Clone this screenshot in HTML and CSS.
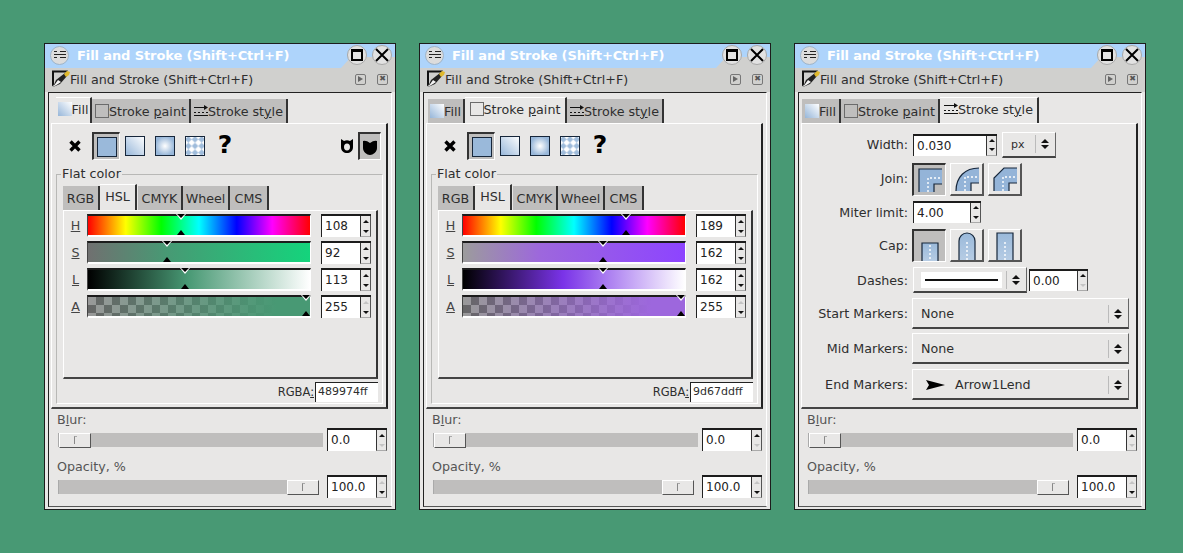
FILE: index.html
```html
<!DOCTYPE html>
<html lang="en">
<head>
  <meta charset="UTF-8" />
  <title>Fill and Stroke</title>
  <link rel="stylesheet" href="styles.css">
</head>
<body>
  <svg class="defs" width="0" height="0">
    <defs>
      <linearGradient id="gradLinear" x1="0" y1="1" x2="1" y2="0">
        <stop offset="0" stop-color="#96b6d9"/><stop offset="1" stop-color="#ffffff"/>
      </linearGradient>
      <radialGradient id="gradRadial">
        <stop offset="0" stop-color="#ffffff"/><stop offset="1" stop-color="#98b7d9"/>
      </radialGradient>
      <pattern id="dots" width="6.667" height="6.667" patternUnits="userSpaceOnUse">
        <rect width="6.667" height="6.667" fill="#fff"/>
        <path d="M3.330 0l3.330 3.330-3.330 3.330L0 3.330z" fill="#9fbcdb"/>
      </pattern>
      <linearGradient id="gradCap" x1="0" y1="0" x2="0" y2="1">
        <stop offset="0" stop-color="#9ab9da"/><stop offset="1" stop-color="#b6cce4"/>
      </linearGradient>
      <symbol id="flat" viewBox="0 0 20 20"><rect x=".5" y=".5" width="19" height="19" fill="#9ab9da" stroke="#16263a"/></symbol>
      <symbol id="linear" viewBox="0 0 20 20"><rect x=".5" y=".5" width="19" height="19" fill="url(#gradLinear)" stroke="#16263a"/></symbol>
      <symbol id="radial" viewBox="0 0 20 20"><rect x=".5" y=".5" width="19" height="19" fill="url(#gradRadial)" stroke="#16263a"/></symbol>
      <symbol id="swatch" viewBox="0 0 20 20"><rect x=".5" y=".5" width="19" height="19" fill="url(#dots)" stroke="#16263a"/></symbol>
      <symbol id="none" viewBox="0 0 14 14"><path d="M2.500 2.500l9 9m0-9l-9 9" fill="none" stroke="#000" stroke-width="3.400"/></symbol>
      <symbol id="tabfill" viewBox="0 0 14 14"><rect width="14" height="14" fill="url(#gradLinear)"/></symbol>
      <symbol id="tabstroke" viewBox="0 0 14 14"><rect x=".5" y=".5" width="13" height="13" fill="none" stroke="#6b6b6b"/></symbol>
      <symbol id="tabstyle" viewBox="0 0 14 14"><path d="M0 3.500h10M0 8.500h2m2 0h2m2 0h2m2 0h2M0 11.500h14" fill="none" stroke="#111"/><path d="M10 1l4 2.500-4 2.500z" fill="#111"/></symbol>
      <symbol id="brush" viewBox="0 0 18 18"><path d="M0 16.500V.5h16l-2 2H2v12z" fill="#111"/><path d="M1 17l3-7 9-7 2 3-7 8z" fill="#222"/><path d="M1 17l5-3 3-2-3-2z" fill="#f4f4f4"/><path d="M12 4l3-3 3 1-1 3-3 2z" fill="#e0b82c"/></symbol>
      <symbol id="menu" viewBox="0 0 12 10"><path d="M0 1.500h3m3 0h6M0 4.500h12M0 7.500h3m3 0h6" fill="none" stroke="#222" stroke-width="1.200"/></symbol>
      <symbol id="ruleHole" viewBox="0 0 14 16"><path fill-rule="evenodd" d="M1 1l3 2q3-1.500 6 0l3-2v8c0 4-3 6-6 6s-6-2-6-6zM7 5.500c-2 0-3 1.500-3 3.500s1 3.500 3 3.500 3-1.500 3-3.500-1-3.500-3-3.500z" fill="#000"/></symbol>
      <symbol id="ruleSolid" viewBox="0 0 16 16"><path d="M1 2q3-1 7 2 4-3 7-2v7c0 4-4 7-7 7s-7-3-7-7z" fill="#000"/></symbol>
      <symbol id="joinMiter" viewBox="0 0 24 24"><path d="M1 1h23v15h-8v8H1z" fill="#94b4d8"/><path d="M1 24V1h23M24 16h-8v8" fill="none" stroke="#16263a" stroke-width="1.200"/><path d="M10 24V10h14" fill="none" stroke="#fff" stroke-width="1.400" stroke-dasharray="2 2"/></symbol>
      <symbol id="joinRound" viewBox="0 0 24 24"><path d="M1 24C1 10 10 1 24 1v15h-8v8z" fill="#94b4d8"/><path d="M1 24C1 10 10 1 24 1M24 16h-8v8" fill="none" stroke="#16263a" stroke-width="1.200"/><path d="M10 24V10h14" fill="none" stroke="#fff" stroke-width="1.400" stroke-dasharray="2 2"/></symbol>
      <symbol id="joinBevel" viewBox="0 0 24 24"><path d="M1 24V11L11 1h13v15h-8v8z" fill="#94b4d8"/><path d="M1 24V11L11 1h13M24 16h-8v8" fill="none" stroke="#16263a" stroke-width="1.200"/><path d="M10 24V10h14" fill="none" stroke="#fff" stroke-width="1.400" stroke-dasharray="2 2"/></symbol>
      <symbol id="capButt" viewBox="0 0 18 28"><path d="M1 10h16v18H1z" fill="url(#gradCap)"/><path d="M1 28V10h16v18" fill="none" stroke="#16263a" stroke-width="1.200"/><path d="M9 12v16" stroke="#fff" stroke-width="1.400" stroke-dasharray="2 2"/></symbol>
      <symbol id="capRound" viewBox="0 0 18 28"><path d="M1 28V9a8 8 0 0 1 16 0v19z" fill="url(#gradCap)"/><path d="M1 28V9a8 8 0 0 1 16 0v19" fill="none" stroke="#16263a" stroke-width="1.200"/><path d="M9 10v18" stroke="#fff" stroke-width="1.400" stroke-dasharray="2 2"/></symbol>
      <symbol id="capSquare" viewBox="0 0 18 28"><path d="M1 1h16v27H1z" fill="url(#gradCap)"/><path d="M1 28V1h16v27" fill="none" stroke="#16263a" stroke-width="1.200"/><path d="M9 10v18" stroke="#fff" stroke-width="1.400" stroke-dasharray="2 2"/></symbol>
      <symbol id="mark" viewBox="0 0 10 23"><path d="M0 0h10l-5 6z" fill="#fff"/><path d="M1 0h8l-4 4z" fill="#000"/><path d="M1 21h8l-4-5z" fill="#000"/></symbol>
    </defs>
  </svg>

  <div class="desk">

    <!-- fill tab, green -->
    <div class="window">
      <div class="titlebar">
        <span class="wm-menu"><svg width="12" height="10"><use href="#menu"/></svg></span>
        <span class="title">Fill and Stroke (Shift+Ctrl+F)</span>
        <span class="wm-btn"><i class="wm-max"></i></span>
        <span class="wm-btn wm-close"><svg width="14" height="14"><path d="M1 1l12 12m0-12L1 13" stroke="#000" stroke-width="2"/></svg></span>
      </div>
      <div class="dockbar">
        <svg class="dock-icon" width="18" height="18"><use href="#brush"/></svg>
        <span class="dock-title">Fill and Stroke (Shift+Ctrl+F)</span>
        <span class="dock-btn"><i class="dock-play"></i></span>
        <span class="dock-btn dock-x">&#10006;</span>
      </div>
      <div class="frame">
        <div class="notebook">
          <div class="tabs">
            <div class="tab active w-fill"><svg width="14" height="14"><use href="#tabfill"/></svg><span>Fill</span></div>
            <div class="tab w-paint"><svg width="14" height="14"><use href="#tabstroke"/></svg><span>Stroke <u>p</u>aint</span></div>
            <div class="tab w-style"><svg width="14" height="14"><use href="#tabstyle"/></svg><span>Stroke st<u>y</u>le</span></div>
          </div>
          <div class="panel">
            <div class="modes">
              <svg class="mode-none" width="14" height="14"><use href="#none"/></svg>
              <span class="toggle on"><svg width="20" height="20"><use href="#flat"/></svg></span>
              <svg class="mode" width="20" height="20"><use href="#linear"/></svg>
              <svg class="mode" width="20" height="20"><use href="#radial"/></svg>
              <svg class="mode" width="20" height="20"><use href="#swatch"/></svg>
              <span class="mode-q">?</span>
              <svg class="rule" width="14" height="16"><use href="#ruleHole"/></svg>
              <span class="toggle on rule-on"><svg width="16" height="16"><use href="#ruleSolid"/></svg></span>
            </div>
            <div class="group">
              <span class="group-label">Flat color</span>
              <div class="tabs sub">
                <div class="tab w-rgb">RGB</div>
                <div class="tab active w-hsl">HSL</div>
                <div class="tab w-cmyk">CMYK</div>
                <div class="tab w-wheel">Wheel</div>
                <div class="tab w-cms">CMS</div>
              </div>
              <div class="subpanel green">
                <div class="slider-row">
                  <span class="chan"><u>H</u></span>
                  <div class="bar hue"><svg class="mark" style="left:42%" width="10" height="23"><use href="#mark"/></svg></div>
                  <div class="spin"><span class="entry">108</span><span class="arrows"><i class="up"></i><i class="down"></i></span></div>
                </div>
                <div class="slider-row">
                  <span class="chan"><u>S</u></span>
                  <div class="bar sat"><svg class="mark" style="left:35.500%" width="10" height="23"><use href="#mark"/></svg></div>
                  <div class="spin"><span class="entry">92</span><span class="arrows"><i class="up"></i><i class="down"></i></span></div>
                </div>
                <div class="slider-row">
                  <span class="chan"><u>L</u></span>
                  <div class="bar lum"><svg class="mark" style="left:43.500%" width="10" height="23"><use href="#mark"/></svg></div>
                  <div class="spin"><span class="entry">113</span><span class="arrows"><i class="up"></i><i class="down"></i></span></div>
                </div>
                <div class="slider-row">
                  <span class="chan"><u>A</u></span>
                  <div class="bar alpha"><svg class="mark" style="left:98%" width="10" height="23"><use href="#mark"/></svg></div>
                  <div class="spin"><span class="entry dim">255</span><span class="arrows"><i class="up off"></i><i class="down"></i></span></div>
                </div>
              </div>
              <div class="rgba"><span class="rgba-label">RGBA<u>:</u></span><span class="rgba-entry">489974ff</span></div>
            </div>
          </div>
        </div>
        <div class="bottom">
          <div class="bottom-label">B<u>l</u>ur:</div>
          <div class="bottom-row">
            <div class="track"><span class="thumb"><i></i></span></div>
            <div class="spin wide"><span class="entry">0.0</span><span class="arrows"><i class="up"></i><i class="down off"></i></span></div>
          </div>
          <div class="bottom-label">Opacity, %</div>
          <div class="bottom-row">
            <div class="track end"><span class="thumb"><i></i></span></div>
            <div class="spin wide"><span class="entry">100.0</span><span class="arrows"><i class="up off"></i><i class="down"></i></span></div>
          </div>
        </div>
      </div>
    </div>

    <!-- stroke paint tab, purple -->
    <div class="window">
      <div class="titlebar">
        <span class="wm-menu"><svg width="12" height="10"><use href="#menu"/></svg></span>
        <span class="title">Fill and Stroke (Shift+Ctrl+F)</span>
        <span class="wm-btn"><i class="wm-max"></i></span>
        <span class="wm-btn wm-close"><svg width="14" height="14"><path d="M1 1l12 12m0-12L1 13" stroke="#000" stroke-width="2"/></svg></span>
      </div>
      <div class="dockbar">
        <svg class="dock-icon" width="18" height="18"><use href="#brush"/></svg>
        <span class="dock-title">Fill and Stroke (Shift+Ctrl+F)</span>
        <span class="dock-btn"><i class="dock-play"></i></span>
        <span class="dock-btn dock-x">&#10006;</span>
      </div>
      <div class="frame">
        <div class="notebook">
          <div class="tabs">
            <div class="tab w-fill2"><svg width="14" height="14"><use href="#tabfill"/></svg><span>Fill</span></div>
            <div class="tab active w-paint2"><svg width="14" height="14"><use href="#tabstroke"/></svg><span>Stroke <u>p</u>aint</span></div>
            <div class="tab w-style"><svg width="14" height="14"><use href="#tabstyle"/></svg><span>Stroke st<u>y</u>le</span></div>
          </div>
          <div class="panel">
            <div class="modes">
              <svg class="mode-none" width="14" height="14"><use href="#none"/></svg>
              <span class="toggle on"><svg width="20" height="20"><use href="#flat"/></svg></span>
              <svg class="mode" width="20" height="20"><use href="#linear"/></svg>
              <svg class="mode" width="20" height="20"><use href="#radial"/></svg>
              <svg class="mode" width="20" height="20"><use href="#swatch"/></svg>
              <span class="mode-q">?</span>
            </div>
            <div class="group">
              <span class="group-label">Flat color</span>
              <div class="tabs sub">
                <div class="tab w-rgb">RGB</div>
                <div class="tab active w-hsl">HSL</div>
                <div class="tab w-cmyk">CMYK</div>
                <div class="tab w-wheel">Wheel</div>
                <div class="tab w-cms">CMS</div>
              </div>
              <div class="subpanel purple">
                <div class="slider-row">
                  <span class="chan"><u>H</u></span>
                  <div class="bar hue"><svg class="mark" style="left:73.500%" width="10" height="23"><use href="#mark"/></svg></div>
                  <div class="spin"><span class="entry">189</span><span class="arrows"><i class="up"></i><i class="down"></i></span></div>
                </div>
                <div class="slider-row">
                  <span class="chan"><u>S</u></span>
                  <div class="bar sat"><svg class="mark" style="left:63%" width="10" height="23"><use href="#mark"/></svg></div>
                  <div class="spin"><span class="entry">162</span><span class="arrows"><i class="up"></i><i class="down"></i></span></div>
                </div>
                <div class="slider-row">
                  <span class="chan"><u>L</u></span>
                  <div class="bar lum"><svg class="mark" style="left:63%" width="10" height="23"><use href="#mark"/></svg></div>
                  <div class="spin"><span class="entry">162</span><span class="arrows"><i class="up"></i><i class="down"></i></span></div>
                </div>
                <div class="slider-row">
                  <span class="chan"><u>A</u></span>
                  <div class="bar alpha"><svg class="mark" style="left:98%" width="10" height="23"><use href="#mark"/></svg></div>
                  <div class="spin"><span class="entry dim">255</span><span class="arrows"><i class="up off"></i><i class="down"></i></span></div>
                </div>
              </div>
              <div class="rgba"><span class="rgba-label">RGBA<u>:</u></span><span class="rgba-entry">9d67ddff</span></div>
            </div>
          </div>
        </div>
        <div class="bottom">
          <div class="bottom-label">B<u>l</u>ur:</div>
          <div class="bottom-row">
            <div class="track"><span class="thumb"><i></i></span></div>
            <div class="spin wide"><span class="entry">0.0</span><span class="arrows"><i class="up"></i><i class="down off"></i></span></div>
          </div>
          <div class="bottom-label">Opacity, %</div>
          <div class="bottom-row">
            <div class="track end"><span class="thumb"><i></i></span></div>
            <div class="spin wide"><span class="entry">100.0</span><span class="arrows"><i class="up off"></i><i class="down"></i></span></div>
          </div>
        </div>
      </div>
    </div>

    <!-- stroke style tab -->
    <div class="window">
      <div class="titlebar">
        <span class="wm-menu"><svg width="12" height="10"><use href="#menu"/></svg></span>
        <span class="title">Fill and Stroke (Shift+Ctrl+F)</span>
        <span class="wm-btn"><i class="wm-max"></i></span>
        <span class="wm-btn wm-close"><svg width="14" height="14"><path d="M1 1l12 12m0-12L1 13" stroke="#000" stroke-width="2"/></svg></span>
      </div>
      <div class="dockbar">
        <svg class="dock-icon" width="18" height="18"><use href="#brush"/></svg>
        <span class="dock-title">Fill and Stroke (Shift+Ctrl+F)</span>
        <span class="dock-btn"><i class="dock-play"></i></span>
        <span class="dock-btn dock-x">&#10006;</span>
      </div>
      <div class="frame">
        <div class="notebook">
          <div class="tabs">
            <div class="tab w-fill3"><svg width="14" height="14"><use href="#tabfill"/></svg><span>Fill</span></div>
            <div class="tab w-paint"><svg width="14" height="14"><use href="#tabstroke"/></svg><span>Stroke <u>p</u>aint</span></div>
            <div class="tab active w-style3"><svg width="14" height="14"><use href="#tabstyle"/></svg><span>Stroke st<u>y</u>le</span></div>
          </div>
          <div class="panel">
            <div class="form">
              <span class="form-label">Width:</span>
              <div class="inline">
                <div class="spin w-width"><span class="entry">0.030</span><span class="arrows"><i class="up"></i><i class="down"></i></span></div>
                <div class="combo unit"><span class="combo-text">px</span><span class="combo-arrow"><i class="up"></i><i class="down"></i></span></div>
              </div>

              <span class="form-label raised">Join:</span>
              <div class="inline gap">
                <span class="icon-btn on"><svg width="24" height="24"><use href="#joinMiter"/></svg></span>
                <span class="icon-btn"><svg width="24" height="24"><use href="#joinRound"/></svg></span>
                <span class="icon-btn"><svg width="24" height="24"><use href="#joinBevel"/></svg></span>
              </div>

              <span class="form-label">Miter limit:</span>
              <div class="spin w-miter"><span class="entry">4.00</span><span class="arrows"><i class="up"></i><i class="down"></i></span></div>

              <span class="form-label">Cap:</span>
              <div class="inline gap">
                <span class="icon-btn cap on"><svg width="18" height="28"><use href="#capButt"/></svg></span>
                <span class="icon-btn cap"><svg width="18" height="28"><use href="#capRound"/></svg></span>
                <span class="icon-btn cap"><svg width="18" height="28"><use href="#capSquare"/></svg></span>
              </div>

              <span class="form-label">Dashes:</span>
              <div class="inline">
                <div class="combo dashes"><span class="dash-preview"><i></i></span><span class="combo-arrow"><i class="up"></i><i class="down"></i></span></div>
                <div class="spin w-dash"><span class="entry">0.00</span><span class="arrows"><i class="up"></i><i class="down off"></i></span></div>
              </div>

              <span class="form-label">Start Markers:</span>
              <div class="combo marker"><span class="combo-text">None</span><span class="combo-arrow"><i class="up"></i><i class="down"></i></span></div>

              <span class="form-label">Mid Markers:</span>
              <div class="combo marker"><span class="combo-text">None</span><span class="combo-arrow"><i class="up"></i><i class="down"></i></span></div>

              <span class="form-label">End Markers:</span>
              <div class="combo marker">
                <span class="combo-text"><svg class="arrow1" width="19" height="10"><path d="M0 0l19 5-19 5 3-5z" fill="#000"/></svg>Arrow1Lend</span>
                <span class="combo-arrow"><i class="up"></i><i class="down"></i></span>
              </div>
            </div>
          </div>
        </div>
        <div class="bottom">
          <div class="bottom-label">B<u>l</u>ur:</div>
          <div class="bottom-row">
            <div class="track"><span class="thumb"><i></i></span></div>
            <div class="spin wide"><span class="entry">0.0</span><span class="arrows"><i class="up"></i><i class="down off"></i></span></div>
          </div>
          <div class="bottom-label">Opacity, %</div>
          <div class="bottom-row">
            <div class="track end"><span class="thumb"><i></i></span></div>
            <div class="spin wide"><span class="entry">100.0</span><span class="arrows"><i class="up off"></i><i class="down"></i></span></div>
          </div>
        </div>
      </div>
    </div>

  </div>
</body>
</html>
```

FILE: styles.css
```css
* {
  box-sizing: border-box;
}

body {
  margin: 0;
  background: #489974;
  font-family: "DejaVu Sans", sans-serif;
  font-size: 12.7px;
  color: #2e2e2e;
}

.defs {
  display: block;
}

.desk {
  display: flex;
  gap: 23px;
  padding: 43px 0 0 44px;
}

.window {
  width: 352px;
  height: 467px;
  border: 1px solid #1c1c1c;
  background: #e8e7e6;
  display: flex;
  flex-direction: column;
}

/* title bar */
.titlebar {
  position: relative;
  height: 24px;
  background: #d0d0ce;
  display: flex;
  align-items: center;
  padding: 0 3px 2px 5px;
  flex-shrink: 0;
}

.titlebar::before {
  content: "";
  position: absolute;
  inset: 0;
  background: #aed4fb;
  clip-path: polygon(0 0, 100% 0, 100% 13px, 306px 13px, 296px 100%, 0 100%);
}

.titlebar > * {
  position: relative;
}

.wm-menu {
  width: 19px;
  height: 19px;
  border-radius: 50%;
  background: #dcdcdc;
  border: 1px solid #9fb4c8;
  display: flex;
  align-items: center;
  justify-content: center;
}

.title {
  flex: 1;
  margin-left: 8px;
  font-size: 13px;
  font-weight: bold;
  color: #fff;
  letter-spacing: -0.1px;
}

.wm-btn {
  width: 20px;
  height: 20px;
  margin-left: 5px;
  border-radius: 50%;
  background: #e2e2e2;
  border: 1px solid #a8a8a8;
  display: flex;
  align-items: center;
  justify-content: center;
}

.wm-max {
  width: 12px;
  height: 12px;
  border: 2px solid #000;
  border-top-width: 3px;
}

/* dock title */
.dockbar {
  height: 24px;
  background: #d0d0ce;
  display: flex;
  align-items: center;
  padding: 0 7px 2px 7px;
  flex-shrink: 0;
}

.dock-title {
  flex: 1;
}

.dock-btn {
  width: 11px;
  height: 11px;
  margin-left: 11px;
  border: 1px solid #777;
  border-radius: 2px;
  display: flex;
  align-items: center;
  justify-content: center;
  font-size: 8px;
  line-height: 1;
  color: #555;
}

.dock-play {
  border-left: 5px solid #666;
  border-top: 3px solid transparent;
  border-bottom: 3px solid transparent;
}

/* dock frame */
.frame {
  flex: 1;
  margin: 0 3px 3px 3px;
  border: 1px solid #222;
  border-right-color: #fff;
  border-bottom-color: #555;
}

.notebook {
  width: 337px;
  margin: 4px 0 0 2px;
}

.tabs {
  display: flex;
  align-items: flex-end;
  height: 26px;
  padding-left: 5px;
}

.tab {
  height: 24px;
  background: #bfbebd;
  border-right: 2px solid #333;
  display: flex;
  align-items: center;
  justify-content: center;
  white-space: nowrap;
}

.tab svg {
  flex-shrink: 0;
}

.tab.active {
  height: 26px;
  padding-bottom: 3px;
  background: #e8e7e6;
  border-top: 1px solid #fff;
}

.w-fill { width: 36px; }
.w-paint { width: 99px; }
.w-style { width: 97px; }
.w-fill2 { width: 37px; margin-left: -3px; }
.w-paint2 { width: 102px; }
.w-fill3 { width: 39px; margin-left: -4px; }
.w-style3 { width: 99px; }

.panel {
  height: 286px;
  border: 1px solid #fff;
  border-right: 2px solid #222;
  border-bottom: 2px solid #444;
}

/* paint mode row */
.modes {
  display: flex;
  align-items: center;
  height: 28px;
  margin-top: 8px;
  padding-left: 16px;
}

.mode-none {
  margin-right: 10px;
}

.toggle {
  width: 28px;
  height: 28px;
  display: flex;
  align-items: center;
  justify-content: center;
  flex-shrink: 0;
}

.toggle.on {
  background: #bfbebd;
  border-top: 2px solid #333;
  border-left: 2px solid #333;
  border-right: 1px solid #fff;
  border-bottom: 1px solid #fff;
}

.mode {
  margin-left: 10px;
}

.toggle + .mode {
  margin-left: 5px;
}

.mode-q {
  width: 20px;
  margin-left: 10px;
  padding-bottom: 2px;
  font-size: 25px;
  font-weight: bold;
  line-height: 26px;
  text-align: center;
  color: #000;
}

.rule {
  margin-left: auto;
  margin-right: 4px;
}

.rule-on {
  width: 23px;
  margin-right: 5px;
}

/* flat color group */
.group {
  position: relative;
  width: 327px;
  height: 230px;
  margin: 14px 0 0 4px;
  border: 1px solid #b8b8b6;
  border-right-color: #fff;
  border-bottom-color: #fff;
  padding: 9px 0 0 6px;
}

.group-label {
  position: absolute;
  top: -9px;
  left: 4px;
  padding: 0 1px;
  background: #e8e7e6;
}

.tabs.sub {
  padding-left: 0;
}

.w-rgb { width: 37px; }
.w-hsl { width: 37px; }
.w-cmyk { width: 45px; margin-left: 1px; }
.w-wheel { width: 47px; }
.w-cms { width: 39px; }

.subpanel {
  width: 315px;
  height: 169px;
  border: 1px solid #fff;
  border-right: 2px solid #333;
  border-bottom: 2px solid #444;
  padding-top: 3px;
}

.green { --pick: #489974; --sat-a: #707070; --sat-b: #14d47c; --mid: #489974; }
.purple { --pick: #9d67dd; --sat-a: #9c9c9c; --sat-b: #8d44ff; --mid: #7a33e8; }

.slider-row {
  display: flex;
  align-items: center;
  height: 23px;
  margin-bottom: 4px;
}

.chan {
  width: 23px;
  text-align: center;
  color: #444;
}

.bar {
  position: relative;
  width: 224px;
  height: 23px;
  margin-right: 10px;
  border-top: 2px solid #1c1c1c;
  border-left: 1px solid #444;
  border-right: 1px solid #fff;
  border-bottom: 2px solid #fff;
}

.mark {
  position: absolute;
  top: -2px;
  margin-left: -5px;
}

.hue {
  background: linear-gradient(to right, #f00, #ff0 17%, #0f0 33%, #0ff 50%, #00f 67%, #f0f 83%, #f00);
}

.sat {
  background: linear-gradient(to right, var(--sat-a), var(--pick) 35%, var(--sat-b));
}

.lum {
  background: linear-gradient(to right, #000, var(--mid) 45%, #fff);
}

.alpha {
  background:
    linear-gradient(to right, transparent, var(--pick) 85%),
    conic-gradient(#666 25%, #999 0 50%, #666 0 75%, #999 0) 0 0 / 16px 16px;
}

/* spin button */
.spin {
  display: flex;
  width: 50px;
  height: 23px;
  flex-shrink: 0;
  border-top: 2px solid #1c1c1c;
  border-left: 1px solid #222;
  background: #fff;
}

.spin.wide {
  width: 60px;
}

.w-width { width: 84px; height: 22px; margin-left: 1px; }
.w-miter { width: 68px; height: 22px; margin-left: 1px; }
.w-dash { width: 59px; height: 22px; margin-left: 2px; }

.entry {
  flex: 1;
  padding-left: 3px;
  font-size: 12px;
  line-height: 21px;
  background: #fff;
  color: #222;
  white-space: nowrap;
}

.arrows {
  width: 11px;
  background: #e8e7e6;
  border-left: 1px solid #333;
  border-right: 1px solid #555;
  border-bottom: 1px solid #aaa;
  display: flex;
  flex-direction: column;
  align-items: center;
  justify-content: space-around;
  flex-shrink: 0;
}

.arrows i,
.combo-arrow i {
  display: block;
  border-left: 3px solid transparent;
  border-right: 3px solid transparent;
}

i.up { border-bottom: 3px solid #111; }
i.down { border-top: 3px solid #111; }
i.up.off { border-bottom-color: #c4c4c4; }
i.down.off { border-top-color: #c4c4c4; }

/* rgba row */
.rgba {
  display: flex;
  justify-content: flex-end;
  align-items: center;
  width: 315px;
  height: 20px;
  margin-top: 3px;
}

.rgba-label {
  font-size: 11.500px;
  margin-right: 1px;
}

.rgba-entry {
  width: 63px;
  height: 20px;
  padding-left: 2px;
  background: #fff;
  border-left: 1px solid #222;
  border-top: 1px solid #222;
  font-size: 11px;
  line-height: 18px;
}

/* blur and opacity */
.bottom {
  padding: 3px 0 0 8px;
}

.bottom-label {
  height: 16px;
  line-height: 16px;
  color: #555;
}

.bottom-row {
  display: flex;
  align-items: center;
  justify-content: space-between;
  width: 329px;
  height: 23px;
  margin: 0 0 8px 1px;
}

.track {
  display: flex;
  width: 265px;
  height: 14px;
  background: #bfbebd;
  border-left: 1px solid #aaa;
}

.track.end {
  width: 261px;
  justify-content: flex-end;
}

.thumb {
  width: 32px;
  height: 15px;
  background: #e8e7e6;
  border-top: 1px solid #fff;
  border-left: 1px solid #fff;
  border-right: 1px solid #555;
  border-bottom: 1px solid #555;
  display: flex;
  justify-content: center;
  align-items: center;
}

.thumb i {
  width: 3px;
  height: 8px;
  border-left: 1px solid #888;
  border-top: 1px solid #aaa;
}

/* stroke style form */
.form {
  display: grid;
  grid-template-columns: 105px 1fr;
  grid-template-rows: 27px 33px 23px 33px 26px 30px 31px 31px;
  column-gap: 4px;
  row-gap: 5px;
  padding-top: 7px;
  margin-left: 1px;
}

.form-label {
  display: flex;
  align-items: center;
  justify-content: flex-end;
  white-space: nowrap;
}

.form-label.raised {
  padding-bottom: 2px;
}

.inline {
  display: flex;
  align-items: center;
}

.inline.gap {
  gap: 4px;
}

.icon-btn {
  width: 34px;
  height: 33px;
  background: #e8e7e6;
  border-top: 1px solid #fff;
  border-left: 1px solid #fff;
  border-right: 2px solid #555;
  border-bottom: 2px solid #555;
  display: flex;
  align-items: center;
  justify-content: center;
  overflow: hidden;
}

.icon-btn.on {
  background: #bfbebd;
  border-top: 2px solid #333;
  border-left: 2px solid #333;
  border-right: 1px solid #fff;
  border-bottom: 1px solid #fff;
}

.icon-btn.cap {
  align-items: flex-end;
}

.combo {
  display: flex;
  align-items: center;
  height: 26px;
  background: #e8e7e6;
  border-top: 1px solid #fff;
  border-left: 1px solid #fff;
  border-right: 1px solid #666;
  border-bottom: 2px solid #444;
}

.unit {
  width: 54px;
  margin-left: 5px;
  font-size: 11px;
}

.unit .combo-text {
  padding-left: 8px;
}

.dashes {
  width: 114px;
  margin-left: 1px;
}

.dash-preview {
  flex: 1;
  height: 16px;
  margin: 0 4px 0 7px;
  padding: 0 4px;
  background: #fff;
  display: flex;
  align-items: center;
}

.dash-preview i {
  flex: 1;
  height: 2px;
  background: #111;
}

.marker {
  width: 217px;
  height: 31px;
  padding-top: 1px;
}

.marker .combo-text {
  padding-left: 8px;
  display: flex;
  align-items: center;
}

.arrow1 {
  margin: 0 10px 0 5px;
}

.combo-text {
  flex: 1;
}

.combo-arrow {
  width: 19px;
  height: 18px;
  border-left: 1px solid #bbb;
  display: flex;
  flex-direction: column;
  align-items: center;
  justify-content: center;
  gap: 2px;
  flex-shrink: 0;
  margin-right: 1px;
}

.combo-arrow i.up,
.combo-arrow i.down {
  border-left-width: 4px;
  border-right-width: 4px;
}

.combo-arrow i.up { border-bottom-width: 4px; }
.combo-arrow i.down { border-top-width: 4px; }
```
